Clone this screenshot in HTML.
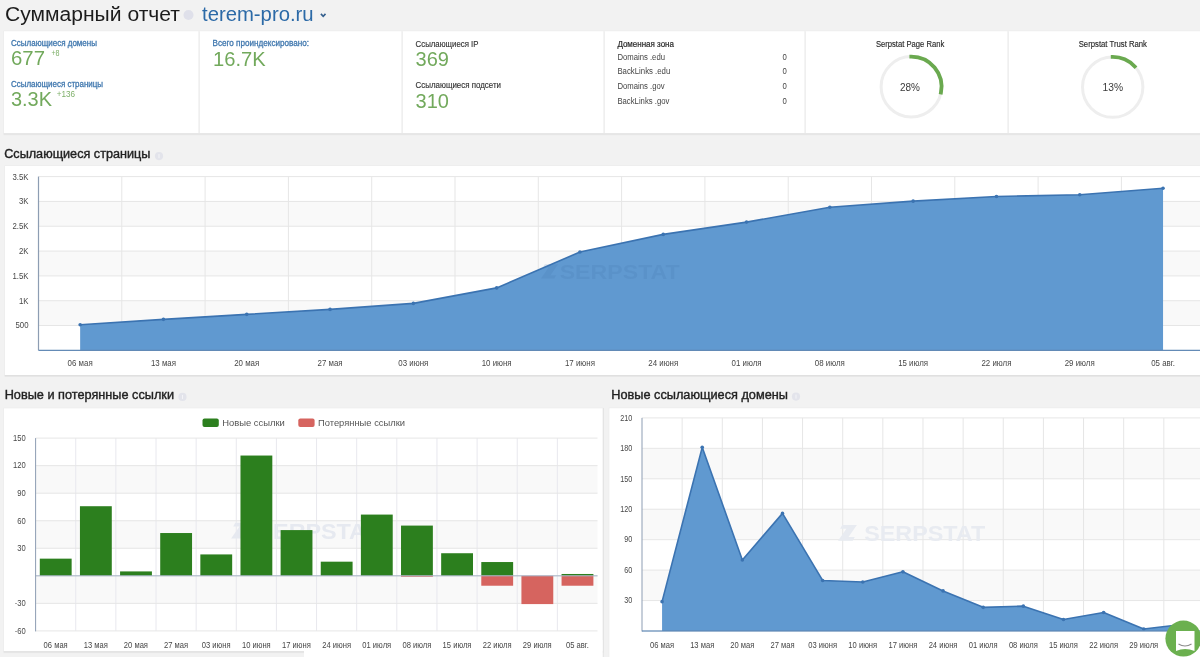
<!DOCTYPE html>
<html><head><meta charset="utf-8"><style>
html,body{margin:0;padding:0;width:1200px;height:657px;overflow:hidden;background:#f2f2f2;}
svg{display:block;font-family:"Liberation Sans", sans-serif;filter:blur(0.35px);}
</style></head><body>
<svg width="1200" height="657" viewBox="0 0 1200 657">
<rect x="0.00" y="0.00" width="1200.00" height="657.00" fill="#f2f2f2" />
<text x="5.00" y="20.60" font-size="20" fill="#1c1c1c" textLength="175.00" lengthAdjust="spacingAndGlyphs">Суммарный отчет</text>
<circle cx="188.5" cy="15" r="5" fill="#dfe0ea"/>
<text x="202.00" y="20.90" font-size="20.3" fill="#2c6aa7" textLength="111.60" lengthAdjust="spacingAndGlyphs">terem-pro.ru</text>
<path d="M320.9 13.9 L323.2 16.4 L325.5 13.9" fill="none" stroke="#35608e" stroke-width="1.6"/>
<rect x="3.50" y="30.70" width="1201.50" height="104.50" fill="#e9e9e9" />
<rect x="3.70" y="133.20" width="1201.30" height="1.20" fill="#e0e0e0" />
<rect x="1204.00" y="31.20" width="1.00" height="103.00" fill="#e4e4e4" />
<rect x="4.00" y="31.20" width="1200.00" height="102.00" fill="#ffffff" />
<rect x="198.50" y="31.20" width="1.20" height="102.00" fill="#e9e9e9" />
<rect x="401.50" y="31.20" width="1.20" height="102.00" fill="#e9e9e9" />
<rect x="603.50" y="31.20" width="1.20" height="102.00" fill="#e9e9e9" />
<rect x="804.50" y="31.20" width="1.20" height="102.00" fill="#e9e9e9" />
<rect x="1007.50" y="31.20" width="1.20" height="102.00" fill="#e9e9e9" />
<text x="11.00" y="46.00" font-size="9" fill="#3f77ae" stroke="#3f77ae" stroke-width="0.3" textLength="86.00" lengthAdjust="spacingAndGlyphs">Ссылающиеся домены</text>
<text x="11.00" y="65.00" font-size="20.5" fill="#72a95c" textLength="34.00" lengthAdjust="spacingAndGlyphs">677</text>
<text x="51.40" y="55.80" font-size="9.3" fill="#7fb06a" textLength="8.20" lengthAdjust="spacingAndGlyphs">+8</text>
<text x="11.00" y="87.00" font-size="9" fill="#3f77ae" stroke="#3f77ae" stroke-width="0.3" textLength="92.00" lengthAdjust="spacingAndGlyphs">Ссылающиеся страницы</text>
<text x="11.00" y="106.00" font-size="20.5" fill="#72a95c" textLength="41.00" lengthAdjust="spacingAndGlyphs">3.3K</text>
<text x="56.80" y="96.50" font-size="9.3" fill="#7fb06a" textLength="18.30" lengthAdjust="spacingAndGlyphs">+136</text>
<text x="212.60" y="45.50" font-size="9" fill="#3f77ae" stroke="#3f77ae" stroke-width="0.3" textLength="96.40" lengthAdjust="spacingAndGlyphs">Всего проиндексировано:</text>
<text x="213.00" y="65.50" font-size="20.5" fill="#72a95c" textLength="52.70" lengthAdjust="spacingAndGlyphs">16.7K</text>
<text x="415.60" y="47.00" font-size="9" fill="#333333" stroke="#333333" stroke-width="0.15" textLength="62.90" lengthAdjust="spacingAndGlyphs">Ссылающиеся IP</text>
<text x="415.60" y="65.80" font-size="20.5" fill="#72a95c" textLength="33.40" lengthAdjust="spacingAndGlyphs">369</text>
<text x="415.60" y="88.30" font-size="9" fill="#333333" stroke="#333333" stroke-width="0.15" textLength="85.40" lengthAdjust="spacingAndGlyphs">Ссылающиеся подсети</text>
<text x="415.60" y="108.00" font-size="20.5" fill="#72a95c" textLength="33.40" lengthAdjust="spacingAndGlyphs">310</text>
<text x="617.40" y="46.50" font-size="8.5" fill="#2a2a2a" stroke="#2a2a2a" stroke-width="0.2" textLength="56.60" lengthAdjust="spacingAndGlyphs">Доменная зона</text>
<text x="617.40" y="59.70" font-size="8.5" fill="#444444" textLength="47.60" lengthAdjust="spacingAndGlyphs">Domains .edu</text>
<text x="782.50" y="59.70" font-size="8.5" fill="#444444" textLength="4.30" lengthAdjust="spacingAndGlyphs">0</text>
<text x="617.40" y="74.10" font-size="8.5" fill="#444444" textLength="52.90" lengthAdjust="spacingAndGlyphs">BackLinks .edu</text>
<text x="782.50" y="74.10" font-size="8.5" fill="#444444" textLength="4.30" lengthAdjust="spacingAndGlyphs">0</text>
<text x="617.40" y="89.10" font-size="8.5" fill="#444444" textLength="47.20" lengthAdjust="spacingAndGlyphs">Domains .gov</text>
<text x="782.50" y="89.10" font-size="8.5" fill="#444444" textLength="4.30" lengthAdjust="spacingAndGlyphs">0</text>
<text x="617.40" y="103.80" font-size="8.5" fill="#444444" textLength="52.00" lengthAdjust="spacingAndGlyphs">BackLinks .gov</text>
<text x="782.50" y="103.80" font-size="8.5" fill="#444444" textLength="4.30" lengthAdjust="spacingAndGlyphs">0</text>
<text x="875.90" y="46.80" font-size="8.5" fill="#2a2a2a" stroke="#2a2a2a" stroke-width="0.15" textLength="68.40" lengthAdjust="spacingAndGlyphs">Serpstat Page Rank</text>
<circle cx="911.3" cy="86.8" r="30.2" fill="none" stroke="#eeeeee" stroke-width="3"/>
<path d="M911.3 56.599999999999994 A30.2 30.2 0 0 1 940.97 92.46" fill="none" stroke="#6aa94f" stroke-width="3.8" stroke-linecap="square"/>
<text x="900.00" y="91.00" font-size="11.5" fill="#3a3a3a" textLength="20.00" lengthAdjust="spacingAndGlyphs">28%</text>
<text x="1078.70" y="46.80" font-size="8.5" fill="#2a2a2a" stroke="#2a2a2a" stroke-width="0.15" textLength="68.30" lengthAdjust="spacingAndGlyphs">Serpstat Trust Rank</text>
<circle cx="1112.7" cy="87.1" r="30.2" fill="none" stroke="#eeeeee" stroke-width="3"/>
<path d="M1112.7 56.89999999999999 A30.2 30.2 0 0 1 1134.71 66.43" fill="none" stroke="#6aa94f" stroke-width="3.8" stroke-linecap="square"/>
<text x="1102.50" y="91.00" font-size="11.5" fill="#3a3a3a" textLength="20.50" lengthAdjust="spacingAndGlyphs">13%</text>
<text x="4.20" y="157.70" font-size="12.5" fill="#222222" stroke="#222222" stroke-width="0.38" textLength="146.20" lengthAdjust="spacingAndGlyphs">Ссылающиеся страницы</text>
<circle cx="159" cy="156.1" r="4.1" fill="#e3e4eb"/>
<rect x="158.5" y="154.1" width="1" height="4" fill="#f4f4f8"/>
<text x="4.70" y="399.30" font-size="12.5" fill="#222222" stroke="#222222" stroke-width="0.38" textLength="169.30" lengthAdjust="spacingAndGlyphs">Новые и потерянные ссылки</text>
<circle cx="182.5" cy="396.90000000000003" r="4.1" fill="#e3e4eb"/>
<rect x="182.0" y="394.90000000000003" width="1" height="4" fill="#f4f4f8"/>
<text x="611.20" y="399.20" font-size="12.5" fill="#222222" stroke="#222222" stroke-width="0.38" textLength="176.80" lengthAdjust="spacingAndGlyphs">Новые ссылающиеся домены</text>
<circle cx="796" cy="396.6" r="4.1" fill="#e3e4eb"/>
<rect x="795.5" y="394.6" width="1" height="4" fill="#f4f4f8"/>
<rect x="4.50" y="165.50" width="1201.50" height="211.50" fill="#e9e9e9" />
<rect x="4.70" y="375.00" width="1201.30" height="1.20" fill="#e0e0e0" />
<rect x="1205.00" y="166.00" width="1.00" height="210.00" fill="#e4e4e4" />
<rect x="5.00" y="166.00" width="1200.00" height="209.00" fill="#ffffff" />
<rect x="38.50" y="201.42" width="1166.50" height="24.82" fill="#f9f9f9" />
<rect x="38.50" y="251.06" width="1166.50" height="24.82" fill="#f9f9f9" />
<rect x="38.50" y="300.71" width="1166.50" height="24.82" fill="#f9f9f9" />
<rect x="121.30" y="176.60" width="1.00" height="173.75" fill="#e6e6e6" />
<rect x="204.60" y="176.60" width="1.00" height="173.75" fill="#e6e6e6" />
<rect x="287.90" y="176.60" width="1.00" height="173.75" fill="#e6e6e6" />
<rect x="371.20" y="176.60" width="1.00" height="173.75" fill="#e6e6e6" />
<rect x="454.50" y="176.60" width="1.00" height="173.75" fill="#e6e6e6" />
<rect x="537.80" y="176.60" width="1.00" height="173.75" fill="#e6e6e6" />
<rect x="621.10" y="176.60" width="1.00" height="173.75" fill="#e6e6e6" />
<rect x="704.40" y="176.60" width="1.00" height="173.75" fill="#e6e6e6" />
<rect x="787.70" y="176.60" width="1.00" height="173.75" fill="#e6e6e6" />
<rect x="871.00" y="176.60" width="1.00" height="173.75" fill="#e6e6e6" />
<rect x="954.30" y="176.60" width="1.00" height="173.75" fill="#e6e6e6" />
<rect x="1037.60" y="176.60" width="1.00" height="173.75" fill="#e6e6e6" />
<rect x="1120.90" y="176.60" width="1.00" height="173.75" fill="#e6e6e6" />
<rect x="38.50" y="176.10" width="1166.50" height="1.00" fill="#e6e6e6" />
<rect x="38.50" y="200.92" width="1166.50" height="1.00" fill="#e6e6e6" />
<rect x="38.50" y="225.74" width="1166.50" height="1.00" fill="#e6e6e6" />
<rect x="38.50" y="250.56" width="1166.50" height="1.00" fill="#e6e6e6" />
<rect x="38.50" y="275.39" width="1166.50" height="1.00" fill="#e6e6e6" />
<rect x="38.50" y="300.21" width="1166.50" height="1.00" fill="#e6e6e6" />
<rect x="38.50" y="325.03" width="1166.50" height="1.00" fill="#e6e6e6" />
<text x="12.45" y="179.50" font-size="8.8" fill="#474747" textLength="16.05" lengthAdjust="spacingAndGlyphs">3.5K</text>
<text x="18.96" y="204.32" font-size="8.8" fill="#474747" textLength="9.54" lengthAdjust="spacingAndGlyphs">3K</text>
<text x="12.45" y="229.14" font-size="8.8" fill="#474747" textLength="16.05" lengthAdjust="spacingAndGlyphs">2.5K</text>
<text x="18.96" y="253.96" font-size="8.8" fill="#474747" textLength="9.54" lengthAdjust="spacingAndGlyphs">2K</text>
<text x="12.45" y="278.79" font-size="8.8" fill="#474747" textLength="16.05" lengthAdjust="spacingAndGlyphs">1.5K</text>
<text x="18.96" y="303.61" font-size="8.8" fill="#474747" textLength="9.54" lengthAdjust="spacingAndGlyphs">1K</text>
<text x="15.48" y="328.43" font-size="8.8" fill="#474747" textLength="13.02" lengthAdjust="spacingAndGlyphs">500</text>
<polygon points="80.15,350.35 80.15,324.78 163.45,319.37 246.75,314.36 330.05,309.39 413.35,303.39 496.65,287.90 579.95,252.01 663.25,234.38 746.55,222.12 829.85,207.18 913.15,201.17 996.45,196.51 1079.75,194.82 1163.05,188.22 1163.05,350.35" fill="#6099d0"/>
<g opacity="0.16">
<path d="M541.0 278.5 L548.6 267.5 L542.9 267.5 L544.8 264.2 L558.1 264.2 L550.5 275.2 L556.2 275.2 L554.3 278.5 Z" fill="#3f6fa8"/>
<text x="559.70" y="278.50" font-size="19.972067039106147" fill="#3f6fa8" font-weight="bold" textLength="120.00" lengthAdjust="spacingAndGlyphs">SERPSTAT</text>
</g>
<polyline points="80.15,324.78 163.45,319.37 246.75,314.36 330.05,309.39 413.35,303.39 496.65,287.90 579.95,252.01 663.25,234.38 746.55,222.12 829.85,207.18 913.15,201.17 996.45,196.51 1079.75,194.82 1163.05,188.22" fill="none" stroke="#3b73b1" stroke-width="1.6" stroke-linejoin="round"/>
<circle cx="80.15" cy="324.78" r="1.8" fill="#3b73b1"/>
<circle cx="163.45" cy="319.37" r="1.8" fill="#3b73b1"/>
<circle cx="246.75" cy="314.36" r="1.8" fill="#3b73b1"/>
<circle cx="330.05" cy="309.39" r="1.8" fill="#3b73b1"/>
<circle cx="413.35" cy="303.39" r="1.8" fill="#3b73b1"/>
<circle cx="496.65" cy="287.90" r="1.8" fill="#3b73b1"/>
<circle cx="579.95" cy="252.01" r="1.8" fill="#3b73b1"/>
<circle cx="663.25" cy="234.38" r="1.8" fill="#3b73b1"/>
<circle cx="746.55" cy="222.12" r="1.8" fill="#3b73b1"/>
<circle cx="829.85" cy="207.18" r="1.8" fill="#3b73b1"/>
<circle cx="913.15" cy="201.17" r="1.8" fill="#3b73b1"/>
<circle cx="996.45" cy="196.51" r="1.8" fill="#3b73b1"/>
<circle cx="1079.75" cy="194.82" r="1.8" fill="#3b73b1"/>
<circle cx="1163.05" cy="188.22" r="1.8" fill="#3b73b1"/>
<rect x="37.90" y="176.60" width="1.20" height="173.75" fill="#8d9db3" />
<rect x="38.50" y="349.75" width="1166.50" height="1.20" fill="#5d86b3" />
<text x="67.61" y="366.30" font-size="8.8" fill="#474747" textLength="25.08" lengthAdjust="spacingAndGlyphs">06 мая</text>
<text x="150.91" y="366.30" font-size="8.8" fill="#474747" textLength="25.08" lengthAdjust="spacingAndGlyphs">13 мая</text>
<text x="234.21" y="366.30" font-size="8.8" fill="#474747" textLength="25.08" lengthAdjust="spacingAndGlyphs">20 мая</text>
<text x="317.51" y="366.30" font-size="8.8" fill="#474747" textLength="25.08" lengthAdjust="spacingAndGlyphs">27 мая</text>
<text x="398.37" y="366.30" font-size="8.8" fill="#474747" textLength="29.96" lengthAdjust="spacingAndGlyphs">03 июня</text>
<text x="481.67" y="366.30" font-size="8.8" fill="#474747" textLength="29.96" lengthAdjust="spacingAndGlyphs">10 июня</text>
<text x="564.97" y="366.30" font-size="8.8" fill="#474747" textLength="29.96" lengthAdjust="spacingAndGlyphs">17 июня</text>
<text x="648.27" y="366.30" font-size="8.8" fill="#474747" textLength="29.96" lengthAdjust="spacingAndGlyphs">24 июня</text>
<text x="731.53" y="366.30" font-size="8.8" fill="#474747" textLength="30.03" lengthAdjust="spacingAndGlyphs">01 июля</text>
<text x="814.83" y="366.30" font-size="8.8" fill="#474747" textLength="30.03" lengthAdjust="spacingAndGlyphs">08 июля</text>
<text x="898.13" y="366.30" font-size="8.8" fill="#474747" textLength="30.03" lengthAdjust="spacingAndGlyphs">15 июля</text>
<text x="981.43" y="366.30" font-size="8.8" fill="#474747" textLength="30.03" lengthAdjust="spacingAndGlyphs">22 июля</text>
<text x="1064.73" y="366.30" font-size="8.8" fill="#474747" textLength="30.03" lengthAdjust="spacingAndGlyphs">29 июля</text>
<text x="1151.21" y="366.30" font-size="8.8" fill="#474747" textLength="23.69" lengthAdjust="spacingAndGlyphs">05 авг.</text>
<rect x="3.50" y="407.80" width="600.30" height="245.30" fill="#e9e9e9" />
<rect x="3.70" y="651.10" width="600.10" height="1.20" fill="#e0e0e0" />
<rect x="602.80" y="408.30" width="1.00" height="243.80" fill="#e4e4e4" />
<rect x="4.00" y="408.30" width="598.80" height="242.80" fill="#ffffff" />
<rect x="304.00" y="640.00" width="298.80" height="17.00" fill="#ffffff" />
<rect x="602.80" y="408.30" width="1.00" height="250.00" fill="#e4e4e4" />
<rect x="35.60" y="465.64" width="561.90" height="27.54" fill="#f9f9f9" />
<rect x="35.60" y="520.73" width="561.90" height="27.54" fill="#f9f9f9" />
<rect x="35.60" y="575.81" width="561.90" height="27.54" fill="#f9f9f9" />
<rect x="75.24" y="438.10" width="1.00" height="192.80" fill="#e8e8ee" />
<rect x="115.37" y="438.10" width="1.00" height="192.80" fill="#e8e8ee" />
<rect x="155.51" y="438.10" width="1.00" height="192.80" fill="#e8e8ee" />
<rect x="195.64" y="438.10" width="1.00" height="192.80" fill="#e8e8ee" />
<rect x="235.78" y="438.10" width="1.00" height="192.80" fill="#e8e8ee" />
<rect x="275.91" y="438.10" width="1.00" height="192.80" fill="#e8e8ee" />
<rect x="316.05" y="438.10" width="1.00" height="192.80" fill="#e8e8ee" />
<rect x="356.19" y="438.10" width="1.00" height="192.80" fill="#e8e8ee" />
<rect x="396.32" y="438.10" width="1.00" height="192.80" fill="#e8e8ee" />
<rect x="436.46" y="438.10" width="1.00" height="192.80" fill="#e8e8ee" />
<rect x="476.59" y="438.10" width="1.00" height="192.80" fill="#e8e8ee" />
<rect x="516.73" y="438.10" width="1.00" height="192.80" fill="#e8e8ee" />
<rect x="556.86" y="438.10" width="1.00" height="192.80" fill="#e8e8ee" />
<rect x="35.60" y="437.60" width="561.90" height="1.00" fill="#e6e6e6" />
<rect x="35.60" y="465.14" width="561.90" height="1.00" fill="#e6e6e6" />
<rect x="35.60" y="492.69" width="561.90" height="1.00" fill="#e6e6e6" />
<rect x="35.60" y="520.23" width="561.90" height="1.00" fill="#e6e6e6" />
<rect x="35.60" y="547.77" width="561.90" height="1.00" fill="#e6e6e6" />
<rect x="35.60" y="575.31" width="561.90" height="1.00" fill="#e6e6e6" />
<rect x="35.60" y="602.86" width="561.90" height="1.00" fill="#e6e6e6" />
<rect x="35.60" y="630.40" width="561.90" height="1.00" fill="#e6e6e6" />
<g opacity="1">
<path d="M231.1 538.5 L239.5 526.4 L233.2 526.4 L235.3 522.7 L250.0 522.7 L241.6 534.8 L247.9 534.8 L245.8 538.5 Z" fill="#e6e9f0"/>
<text x="257.50" y="538.50" font-size="22.067039106145252" fill="#e6e9f0" font-weight="bold" textLength="121.00" lengthAdjust="spacingAndGlyphs">SERPSTAT</text>
</g>
<rect x="39.80" y="558.65" width="31.84" height="17.17" fill="#2c7f1e" />
<rect x="79.94" y="506.22" width="31.84" height="69.59" fill="#2c7f1e" />
<rect x="120.07" y="571.41" width="31.84" height="4.41" fill="#2c7f1e" />
<rect x="160.21" y="533.03" width="31.84" height="42.78" fill="#2c7f1e" />
<rect x="200.34" y="554.42" width="31.84" height="21.39" fill="#2c7f1e" />
<rect x="240.48" y="455.54" width="31.84" height="120.27" fill="#2c7f1e" />
<rect x="280.61" y="530.09" width="31.84" height="45.72" fill="#2c7f1e" />
<rect x="320.75" y="561.68" width="31.84" height="14.14" fill="#2c7f1e" />
<rect x="360.89" y="514.58" width="31.84" height="61.24" fill="#2c7f1e" />
<rect x="401.02" y="525.59" width="31.84" height="50.22" fill="#2c7f1e" />
<rect x="401.02" y="575.81" width="31.84" height="0.92" fill="#d6645f" />
<rect x="441.16" y="553.23" width="31.84" height="22.59" fill="#2c7f1e" />
<rect x="481.29" y="562.04" width="31.84" height="13.77" fill="#2c7f1e" />
<rect x="481.29" y="575.81" width="31.84" height="9.92" fill="#d6645f" />
<rect x="521.43" y="575.81" width="31.84" height="28.28" fill="#d6645f" />
<rect x="561.56" y="573.98" width="31.84" height="1.84" fill="#2c7f1e" />
<rect x="561.56" y="575.81" width="31.84" height="9.92" fill="#d6645f" />
<rect x="35.60" y="575.31" width="561.90" height="1.00" fill="#a9b6c8" />
<rect x="35.10" y="438.10" width="1.00" height="193.30" fill="#8d9db3" />
<text x="13.12" y="440.90" font-size="8.8" fill="#474747" textLength="12.68" lengthAdjust="spacingAndGlyphs">150</text>
<text x="13.12" y="468.44" font-size="8.8" fill="#474747" textLength="12.68" lengthAdjust="spacingAndGlyphs">120</text>
<text x="17.35" y="495.99" font-size="8.8" fill="#474747" textLength="8.45" lengthAdjust="spacingAndGlyphs">90</text>
<text x="17.35" y="523.53" font-size="8.8" fill="#474747" textLength="8.45" lengthAdjust="spacingAndGlyphs">60</text>
<text x="17.35" y="551.07" font-size="8.8" fill="#474747" textLength="8.45" lengthAdjust="spacingAndGlyphs">30</text>
<text x="14.82" y="606.16" font-size="8.8" fill="#474747" textLength="10.98" lengthAdjust="spacingAndGlyphs">-30</text>
<text x="14.82" y="633.70" font-size="8.8" fill="#474747" textLength="10.98" lengthAdjust="spacingAndGlyphs">-60</text>
<text x="43.60" y="647.90" font-size="8.8" fill="#474747" textLength="24.13" lengthAdjust="spacingAndGlyphs">06 мая</text>
<text x="83.74" y="647.90" font-size="8.8" fill="#474747" textLength="24.13" lengthAdjust="spacingAndGlyphs">13 мая</text>
<text x="123.87" y="647.90" font-size="8.8" fill="#474747" textLength="24.13" lengthAdjust="spacingAndGlyphs">20 мая</text>
<text x="164.01" y="647.90" font-size="8.8" fill="#474747" textLength="24.13" lengthAdjust="spacingAndGlyphs">27 мая</text>
<text x="201.80" y="647.90" font-size="8.8" fill="#474747" textLength="28.82" lengthAdjust="spacingAndGlyphs">03 июня</text>
<text x="241.93" y="647.90" font-size="8.8" fill="#474747" textLength="28.82" lengthAdjust="spacingAndGlyphs">10 июня</text>
<text x="282.07" y="647.90" font-size="8.8" fill="#474747" textLength="28.82" lengthAdjust="spacingAndGlyphs">17 июня</text>
<text x="322.21" y="647.90" font-size="8.8" fill="#474747" textLength="28.82" lengthAdjust="spacingAndGlyphs">24 июня</text>
<text x="362.31" y="647.90" font-size="8.8" fill="#474747" textLength="28.89" lengthAdjust="spacingAndGlyphs">01 июля</text>
<text x="402.44" y="647.90" font-size="8.8" fill="#474747" textLength="28.89" lengthAdjust="spacingAndGlyphs">08 июля</text>
<text x="442.58" y="647.90" font-size="8.8" fill="#474747" textLength="28.89" lengthAdjust="spacingAndGlyphs">15 июля</text>
<text x="482.71" y="647.90" font-size="8.8" fill="#474747" textLength="28.89" lengthAdjust="spacingAndGlyphs">22 июля</text>
<text x="522.85" y="647.90" font-size="8.8" fill="#474747" textLength="28.89" lengthAdjust="spacingAndGlyphs">29 июля</text>
<text x="566.04" y="647.90" font-size="8.8" fill="#474747" textLength="22.79" lengthAdjust="spacingAndGlyphs">05 авг.</text>
<rect x="202.50" y="418.40" width="16.30" height="8.60" fill="#2c7f1e" rx="2"/>
<text x="222.20" y="426.20" font-size="9" fill="#555555" textLength="62.70" lengthAdjust="spacingAndGlyphs">Новые ссылки</text>
<rect x="298.30" y="418.40" width="16.30" height="8.60" fill="#d6645f" rx="2"/>
<text x="318.00" y="426.20" font-size="9" fill="#555555" textLength="87.00" lengthAdjust="spacingAndGlyphs">Потерянные ссылки</text>
<rect x="608.80" y="407.70" width="601.50" height="262.50" fill="#e9e9e9" />
<rect x="609.00" y="668.20" width="601.30" height="1.20" fill="#e0e0e0" />
<rect x="1209.30" y="408.20" width="1.00" height="261.00" fill="#e4e4e4" />
<rect x="609.30" y="408.20" width="600.00" height="260.00" fill="#ffffff" />
<rect x="642.00" y="448.34" width="564.00" height="30.44" fill="#f9f9f9" />
<rect x="642.00" y="509.23" width="564.00" height="30.44" fill="#f9f9f9" />
<rect x="642.00" y="570.11" width="564.00" height="30.44" fill="#f9f9f9" />
<rect x="681.64" y="417.90" width="1.00" height="213.10" fill="#e6e6e6" />
<rect x="721.78" y="417.90" width="1.00" height="213.10" fill="#e6e6e6" />
<rect x="761.92" y="417.90" width="1.00" height="213.10" fill="#e6e6e6" />
<rect x="802.06" y="417.90" width="1.00" height="213.10" fill="#e6e6e6" />
<rect x="842.20" y="417.90" width="1.00" height="213.10" fill="#e6e6e6" />
<rect x="882.34" y="417.90" width="1.00" height="213.10" fill="#e6e6e6" />
<rect x="922.48" y="417.90" width="1.00" height="213.10" fill="#e6e6e6" />
<rect x="962.62" y="417.90" width="1.00" height="213.10" fill="#e6e6e6" />
<rect x="1002.76" y="417.90" width="1.00" height="213.10" fill="#e6e6e6" />
<rect x="1042.90" y="417.90" width="1.00" height="213.10" fill="#e6e6e6" />
<rect x="1083.04" y="417.90" width="1.00" height="213.10" fill="#e6e6e6" />
<rect x="1123.18" y="417.90" width="1.00" height="213.10" fill="#e6e6e6" />
<rect x="1163.32" y="417.90" width="1.00" height="213.10" fill="#e6e6e6" />
<rect x="642.00" y="417.40" width="564.00" height="1.00" fill="#e6e6e6" />
<rect x="642.00" y="447.84" width="564.00" height="1.00" fill="#e6e6e6" />
<rect x="642.00" y="478.29" width="564.00" height="1.00" fill="#e6e6e6" />
<rect x="642.00" y="508.73" width="564.00" height="1.00" fill="#e6e6e6" />
<rect x="642.00" y="539.17" width="564.00" height="1.00" fill="#e6e6e6" />
<rect x="642.00" y="569.61" width="564.00" height="1.00" fill="#e6e6e6" />
<rect x="642.00" y="600.06" width="564.00" height="1.00" fill="#e6e6e6" />
<g opacity="1">
<path d="M838.0 540.7 L846.4 528.7 L840.1 528.7 L842.2 525.0 L856.9 525.0 L848.5 537.0 L854.8 537.0 L852.7 540.7 Z" fill="#e8ebf1"/>
<text x="864.20" y="540.70" font-size="21.92737430167598" fill="#e8ebf1" font-weight="bold" textLength="121.00" lengthAdjust="spacingAndGlyphs">SERPSTAT</text>
</g>
<text x="620.19" y="420.70" font-size="8.8" fill="#474747" textLength="12.01" lengthAdjust="spacingAndGlyphs">210</text>
<text x="620.19" y="451.14" font-size="8.8" fill="#474747" textLength="12.01" lengthAdjust="spacingAndGlyphs">180</text>
<text x="620.19" y="481.59" font-size="8.8" fill="#474747" textLength="12.01" lengthAdjust="spacingAndGlyphs">150</text>
<text x="620.19" y="512.03" font-size="8.8" fill="#474747" textLength="12.01" lengthAdjust="spacingAndGlyphs">120</text>
<text x="624.19" y="542.47" font-size="8.8" fill="#474747" textLength="8.01" lengthAdjust="spacingAndGlyphs">90</text>
<text x="624.19" y="572.91" font-size="8.8" fill="#474747" textLength="8.01" lengthAdjust="spacingAndGlyphs">60</text>
<text x="624.19" y="603.36" font-size="8.8" fill="#474747" textLength="8.01" lengthAdjust="spacingAndGlyphs">30</text>
<polygon points="662.07,631 662.07,601.67 702.21,447.33 742.35,559.97 782.49,513.39 822.63,580.46 862.77,581.99 902.91,571.84 943.05,590.92 983.19,607.36 1023.33,606.14 1063.47,619.43 1103.61,612.43 1143.75,628.97 1183.89,624.30 1183.89,631" fill="#6099d0"/>
<polyline points="662.07,601.67 702.21,447.33 742.35,559.97 782.49,513.39 822.63,580.46 862.77,581.99 902.91,571.84 943.05,590.92 983.19,607.36 1023.33,606.14 1063.47,619.43 1103.61,612.43 1143.75,628.97 1183.89,624.30" fill="none" stroke="#3b73b1" stroke-width="1.6" stroke-linejoin="round"/>
<circle cx="662.07" cy="601.67" r="1.8" fill="#3b73b1"/>
<circle cx="702.21" cy="447.33" r="1.8" fill="#3b73b1"/>
<circle cx="742.35" cy="559.97" r="1.8" fill="#3b73b1"/>
<circle cx="782.49" cy="513.39" r="1.8" fill="#3b73b1"/>
<circle cx="822.63" cy="580.46" r="1.8" fill="#3b73b1"/>
<circle cx="862.77" cy="581.99" r="1.8" fill="#3b73b1"/>
<circle cx="902.91" cy="571.84" r="1.8" fill="#3b73b1"/>
<circle cx="943.05" cy="590.92" r="1.8" fill="#3b73b1"/>
<circle cx="983.19" cy="607.36" r="1.8" fill="#3b73b1"/>
<circle cx="1023.33" cy="606.14" r="1.8" fill="#3b73b1"/>
<circle cx="1063.47" cy="619.43" r="1.8" fill="#3b73b1"/>
<circle cx="1103.61" cy="612.43" r="1.8" fill="#3b73b1"/>
<circle cx="1143.75" cy="628.97" r="1.8" fill="#3b73b1"/>
<circle cx="1183.89" cy="624.30" r="1.8" fill="#3b73b1"/>
<rect x="641.50" y="417.90" width="1.00" height="213.60" fill="#8d9db3" />
<rect x="642.00" y="630.40" width="564.00" height="1.20" fill="#5d86b3" />
<text x="650.00" y="647.90" font-size="8.8" fill="#474747" textLength="24.13" lengthAdjust="spacingAndGlyphs">06 мая</text>
<text x="690.14" y="647.90" font-size="8.8" fill="#474747" textLength="24.13" lengthAdjust="spacingAndGlyphs">13 мая</text>
<text x="730.28" y="647.90" font-size="8.8" fill="#474747" textLength="24.13" lengthAdjust="spacingAndGlyphs">20 мая</text>
<text x="770.42" y="647.90" font-size="8.8" fill="#474747" textLength="24.13" lengthAdjust="spacingAndGlyphs">27 мая</text>
<text x="808.22" y="647.90" font-size="8.8" fill="#474747" textLength="28.82" lengthAdjust="spacingAndGlyphs">03 июня</text>
<text x="848.36" y="647.90" font-size="8.8" fill="#474747" textLength="28.82" lengthAdjust="spacingAndGlyphs">10 июня</text>
<text x="888.50" y="647.90" font-size="8.8" fill="#474747" textLength="28.82" lengthAdjust="spacingAndGlyphs">17 июня</text>
<text x="928.64" y="647.90" font-size="8.8" fill="#474747" textLength="28.82" lengthAdjust="spacingAndGlyphs">24 июня</text>
<text x="968.74" y="647.90" font-size="8.8" fill="#474747" textLength="28.89" lengthAdjust="spacingAndGlyphs">01 июля</text>
<text x="1008.88" y="647.90" font-size="8.8" fill="#474747" textLength="28.89" lengthAdjust="spacingAndGlyphs">08 июля</text>
<text x="1049.02" y="647.90" font-size="8.8" fill="#474747" textLength="28.89" lengthAdjust="spacingAndGlyphs">15 июля</text>
<text x="1089.16" y="647.90" font-size="8.8" fill="#474747" textLength="28.89" lengthAdjust="spacingAndGlyphs">22 июля</text>
<text x="1129.30" y="647.90" font-size="8.8" fill="#474747" textLength="28.89" lengthAdjust="spacingAndGlyphs">29 июля</text>
<text x="1172.50" y="647.90" font-size="8.8" fill="#474747" textLength="22.79" lengthAdjust="spacingAndGlyphs">05 авг.</text>
<circle cx="1183.4" cy="638.6" r="18" fill="#6bb04f"/>
<path d="M1176 631 H1194.5 V651 Q1185 647 1176 651 Z" fill="#ffffff"/>
<path d="M1178.5 644 Q1185 648 1191.5 644" fill="none" stroke="#8a8a8a" stroke-width="1.2"/>
</svg></body></html>
